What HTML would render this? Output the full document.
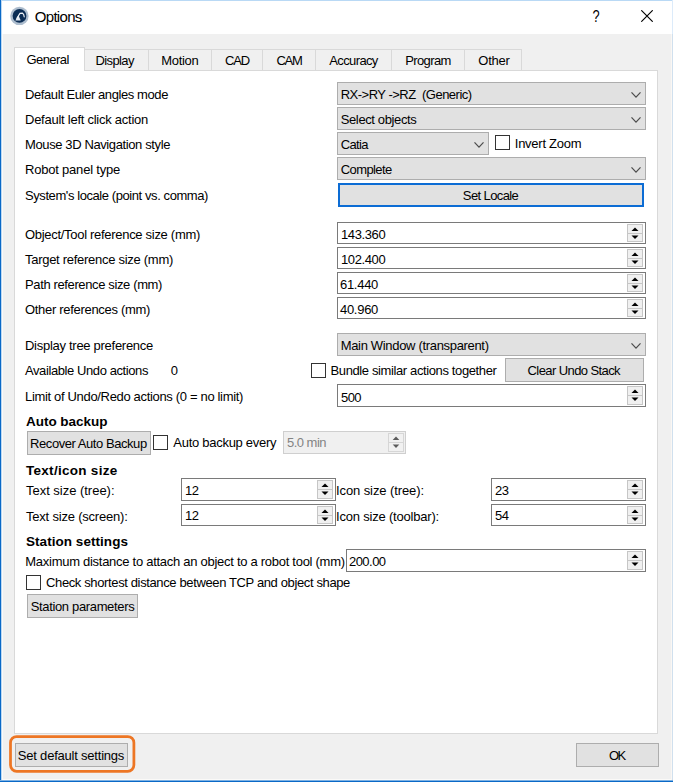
<!DOCTYPE html>
<html><head><meta charset="utf-8"><title>Options</title>
<style>
html,body{margin:0;padding:0}
body{width:673px;height:782px;overflow:hidden;background:#f0f0f0;position:relative;font-family:"Liberation Sans", sans-serif;font-size:13px;color:#000}
#w>div,#w>svg{position:absolute}
.t{white-space:nowrap;line-height:20px;height:20px}
</style></head><body><div id="w">
<div style="left:0px;top:0px;width:673px;height:34px;background:#fff"></div>
<div style="left:0px;top:0px;width:673px;height:1px;background:#b9d9f5"></div>
<div style="left:2px;top:34px;width:1px;height:746px;background:#fbfaf8"></div>
<div style="left:0px;top:779px;width:673px;height:1px;background:#fbfaf8"></div>
<div style="left:0px;top:0px;width:1px;height:782px;background:#0a69c7"></div>
<div style="left:1px;top:0px;width:1px;height:782px;background:#bcd8f2"></div>
<div style="left:671px;top:34px;width:1px;height:746px;background:#faf7f4"></div>
<div style="left:672px;top:0px;width:1px;height:782px;background:#d0e0ee"></div>
<div style="left:672px;top:0px;width:1px;height:34px;background:#dcebfa"></div>
<div style="left:0px;top:780px;width:673px;height:1px;background:#7fb2e3"></div>
<div style="left:0px;top:781px;width:673px;height:1px;background:#0a69c7"></div>
<div style="left:14px;top:70px;width:644px;height:664px;background:#fff;border:1px solid #d9d9d9;box-sizing:border-box"></div>
<div style="left:464px;top:49px;width:58px;height:21px;background:#f0f0f0;border:1px solid #d9d9d9;border-bottom:none;box-sizing:border-box"></div>
<div style="left:391px;top:49px;width:74px;height:21px;background:#f0f0f0;border:1px solid #d9d9d9;border-bottom:none;box-sizing:border-box"></div>
<div style="left:315px;top:49px;width:77px;height:21px;background:#f0f0f0;border:1px solid #d9d9d9;border-bottom:none;box-sizing:border-box"></div>
<div style="left:262px;top:49px;width:54px;height:21px;background:#f0f0f0;border:1px solid #d9d9d9;border-bottom:none;box-sizing:border-box"></div>
<div style="left:211px;top:49px;width:52px;height:21px;background:#f0f0f0;border:1px solid #d9d9d9;border-bottom:none;box-sizing:border-box"></div>
<div style="left:148px;top:49px;width:64px;height:21px;background:#f0f0f0;border:1px solid #d9d9d9;border-bottom:none;box-sizing:border-box"></div>
<div style="left:84px;top:49px;width:65px;height:21px;background:#f0f0f0;border:1px solid #d9d9d9;border-bottom:none;box-sizing:border-box"></div>
<div style="left:14px;top:47px;width:71px;height:24px;background:#fff;border:1px solid #d9d9d9;border-bottom:none;box-sizing:border-box"></div>
<div style="left:337px;top:82px;width:309px;height:23px;background:#e1e1e1;border:1px solid #adadad;box-sizing:border-box"></div>
<svg style="left:629.5px;top:90.6px" width="12" height="8" viewBox="0 0 12 8"><path d="M1.5 1.4 L6 6.2 L10.5 1.4" fill="none" stroke="#4d4d4d" stroke-width="1.25"/></svg>
<div style="left:337px;top:107px;width:309px;height:23px;background:#e1e1e1;border:1px solid #adadad;box-sizing:border-box"></div>
<svg style="left:629.5px;top:115.6px" width="12" height="8" viewBox="0 0 12 8"><path d="M1.5 1.4 L6 6.2 L10.5 1.4" fill="none" stroke="#4d4d4d" stroke-width="1.25"/></svg>
<div style="left:337px;top:132px;width:152px;height:23px;background:#e1e1e1;border:1px solid #adadad;box-sizing:border-box"></div>
<svg style="left:472.5px;top:140.6px" width="12" height="8" viewBox="0 0 12 8"><path d="M1.5 1.4 L6 6.2 L10.5 1.4" fill="none" stroke="#4d4d4d" stroke-width="1.25"/></svg>
<div style="left:495px;top:135px;width:15px;height:15px;background:#fff;border:1px solid #333;box-sizing:border-box"></div>
<div style="left:337px;top:157px;width:309px;height:23px;background:#e1e1e1;border:1px solid #adadad;box-sizing:border-box"></div>
<svg style="left:629.5px;top:165.6px" width="12" height="8" viewBox="0 0 12 8"><path d="M1.5 1.4 L6 6.2 L10.5 1.4" fill="none" stroke="#4d4d4d" stroke-width="1.25"/></svg>
<div style="left:338px;top:183px;width:306px;height:24px;background:#e1e1e1;border:2px solid #0c6cd4;box-sizing:border-box"></div>
<div style="left:337px;top:222px;width:309px;height:22px;background:#fff;border:1px solid #7a7a7a;box-sizing:border-box"></div>
<div style="left:627px;top:224px;width:16px;height:18px;background:#f0f0f0;border:1px solid #c6c6c6;box-sizing:border-box"></div>
<div style="left:627px;top:233px;width:16px;height:1px;background:#c6c6c6"></div>
<svg style="left:631px;top:227px" width="8" height="5" viewBox="0 0 8 5"><path d="M0.5 4.1 L4 0.4 L7.5 4.1 Z" fill="#000"/></svg>
<svg style="left:631px;top:235px" width="8" height="5" viewBox="0 0 8 5"><path d="M0.5 0.4 L4 4.1 L7.5 0.4 Z" fill="#000"/></svg>
<div style="left:337px;top:247px;width:309px;height:22px;background:#fff;border:1px solid #7a7a7a;box-sizing:border-box"></div>
<div style="left:627px;top:249px;width:16px;height:18px;background:#f0f0f0;border:1px solid #c6c6c6;box-sizing:border-box"></div>
<div style="left:627px;top:258px;width:16px;height:1px;background:#c6c6c6"></div>
<svg style="left:631px;top:252px" width="8" height="5" viewBox="0 0 8 5"><path d="M0.5 4.1 L4 0.4 L7.5 4.1 Z" fill="#000"/></svg>
<svg style="left:631px;top:260px" width="8" height="5" viewBox="0 0 8 5"><path d="M0.5 0.4 L4 4.1 L7.5 0.4 Z" fill="#000"/></svg>
<div style="left:337px;top:272px;width:309px;height:22px;background:#fff;border:1px solid #7a7a7a;box-sizing:border-box"></div>
<div style="left:627px;top:274px;width:16px;height:18px;background:#f0f0f0;border:1px solid #c6c6c6;box-sizing:border-box"></div>
<div style="left:627px;top:283px;width:16px;height:1px;background:#c6c6c6"></div>
<svg style="left:631px;top:277px" width="8" height="5" viewBox="0 0 8 5"><path d="M0.5 4.1 L4 0.4 L7.5 4.1 Z" fill="#000"/></svg>
<svg style="left:631px;top:285px" width="8" height="5" viewBox="0 0 8 5"><path d="M0.5 0.4 L4 4.1 L7.5 0.4 Z" fill="#000"/></svg>
<div style="left:337px;top:297px;width:309px;height:22px;background:#fff;border:1px solid #7a7a7a;box-sizing:border-box"></div>
<div style="left:627px;top:299px;width:16px;height:18px;background:#f0f0f0;border:1px solid #c6c6c6;box-sizing:border-box"></div>
<div style="left:627px;top:308px;width:16px;height:1px;background:#c6c6c6"></div>
<svg style="left:631px;top:302px" width="8" height="5" viewBox="0 0 8 5"><path d="M0.5 4.1 L4 0.4 L7.5 4.1 Z" fill="#000"/></svg>
<svg style="left:631px;top:310px" width="8" height="5" viewBox="0 0 8 5"><path d="M0.5 0.4 L4 4.1 L7.5 0.4 Z" fill="#000"/></svg>
<div style="left:337px;top:333px;width:309px;height:23px;background:#e1e1e1;border:1px solid #adadad;box-sizing:border-box"></div>
<svg style="left:629.5px;top:341.6px" width="12" height="8" viewBox="0 0 12 8"><path d="M1.5 1.4 L6 6.2 L10.5 1.4" fill="none" stroke="#4d4d4d" stroke-width="1.25"/></svg>
<div style="left:311px;top:363px;width:15px;height:15px;background:#fff;border:1px solid #333;box-sizing:border-box"></div>
<div style="left:505px;top:358px;width:139px;height:24px;background:#e1e1e1;border:1px solid #adadad;box-sizing:border-box"></div>
<div style="left:337px;top:384px;width:309px;height:23px;background:#fff;border:1px solid #7a7a7a;box-sizing:border-box"></div>
<div style="left:627px;top:386px;width:16px;height:19px;background:#f0f0f0;border:1px solid #c6c6c6;box-sizing:border-box"></div>
<div style="left:627px;top:395px;width:16px;height:1px;background:#c6c6c6"></div>
<svg style="left:631px;top:389px" width="8" height="5" viewBox="0 0 8 5"><path d="M0.5 4.1 L4 0.4 L7.5 4.1 Z" fill="#000"/></svg>
<svg style="left:631px;top:397px" width="8" height="5" viewBox="0 0 8 5"><path d="M0.5 0.4 L4 4.1 L7.5 0.4 Z" fill="#000"/></svg>
<div style="left:27px;top:431px;width:124px;height:24px;background:#e1e1e1;border:1px solid #adadad;box-sizing:border-box"></div>
<div style="left:153px;top:435px;width:15px;height:15px;background:#fff;border:1px solid #333;box-sizing:border-box"></div>
<div style="left:283px;top:431px;width:123px;height:23px;background:#f0f0f0;border:1px solid #cfcfcf;box-sizing:border-box"></div>
<div style="left:388px;top:433px;width:16px;height:19px;background:#f1f1f1;border:1px solid #d6d6d6;box-sizing:border-box"></div>
<div style="left:388px;top:442px;width:16px;height:1px;background:#d6d6d6"></div>
<svg style="left:392px;top:436px" width="8" height="5" viewBox="0 0 8 5"><path d="M0.7000000000000002 4.1 L4 0.4 L7.3 4.1 Z" fill="#5c5c5c"/></svg>
<svg style="left:392px;top:444px" width="8" height="5" viewBox="0 0 8 5"><path d="M0.7000000000000002 0.4 L4 4.1 L7.3 0.4 Z" fill="#5c5c5c"/></svg>
<div style="left:181px;top:478px;width:155px;height:23px;background:#fff;border:1px solid #7a7a7a;box-sizing:border-box"></div>
<div style="left:317px;top:480px;width:16px;height:19px;background:#f0f0f0;border:1px solid #c6c6c6;box-sizing:border-box"></div>
<div style="left:317px;top:489px;width:16px;height:1px;background:#c6c6c6"></div>
<svg style="left:321px;top:483px" width="8" height="5" viewBox="0 0 8 5"><path d="M0.5 4.1 L4 0.4 L7.5 4.1 Z" fill="#000"/></svg>
<svg style="left:321px;top:491px" width="8" height="5" viewBox="0 0 8 5"><path d="M0.5 0.4 L4 4.1 L7.5 0.4 Z" fill="#000"/></svg>
<div style="left:491px;top:478px;width:155px;height:23px;background:#fff;border:1px solid #7a7a7a;box-sizing:border-box"></div>
<div style="left:627px;top:480px;width:16px;height:19px;background:#f0f0f0;border:1px solid #c6c6c6;box-sizing:border-box"></div>
<div style="left:627px;top:489px;width:16px;height:1px;background:#c6c6c6"></div>
<svg style="left:631px;top:483px" width="8" height="5" viewBox="0 0 8 5"><path d="M0.5 4.1 L4 0.4 L7.5 4.1 Z" fill="#000"/></svg>
<svg style="left:631px;top:491px" width="8" height="5" viewBox="0 0 8 5"><path d="M0.5 0.4 L4 4.1 L7.5 0.4 Z" fill="#000"/></svg>
<div style="left:181px;top:504px;width:155px;height:22px;background:#fff;border:1px solid #7a7a7a;box-sizing:border-box"></div>
<div style="left:317px;top:506px;width:16px;height:18px;background:#f0f0f0;border:1px solid #c6c6c6;box-sizing:border-box"></div>
<div style="left:317px;top:515px;width:16px;height:1px;background:#c6c6c6"></div>
<svg style="left:321px;top:509px" width="8" height="5" viewBox="0 0 8 5"><path d="M0.5 4.1 L4 0.4 L7.5 4.1 Z" fill="#000"/></svg>
<svg style="left:321px;top:517px" width="8" height="5" viewBox="0 0 8 5"><path d="M0.5 0.4 L4 4.1 L7.5 0.4 Z" fill="#000"/></svg>
<div style="left:491px;top:504px;width:155px;height:22px;background:#fff;border:1px solid #7a7a7a;box-sizing:border-box"></div>
<div style="left:627px;top:506px;width:16px;height:18px;background:#f0f0f0;border:1px solid #c6c6c6;box-sizing:border-box"></div>
<div style="left:627px;top:515px;width:16px;height:1px;background:#c6c6c6"></div>
<svg style="left:631px;top:509px" width="8" height="5" viewBox="0 0 8 5"><path d="M0.5 4.1 L4 0.4 L7.5 4.1 Z" fill="#000"/></svg>
<svg style="left:631px;top:517px" width="8" height="5" viewBox="0 0 8 5"><path d="M0.5 0.4 L4 4.1 L7.5 0.4 Z" fill="#000"/></svg>
<div style="left:346px;top:549px;width:300px;height:23px;background:#fff;border:1px solid #7a7a7a;box-sizing:border-box"></div>
<div style="left:627px;top:551px;width:16px;height:19px;background:#f0f0f0;border:1px solid #c6c6c6;box-sizing:border-box"></div>
<div style="left:627px;top:560px;width:16px;height:1px;background:#c6c6c6"></div>
<svg style="left:631px;top:554px" width="8" height="5" viewBox="0 0 8 5"><path d="M0.5 4.1 L4 0.4 L7.5 4.1 Z" fill="#000"/></svg>
<svg style="left:631px;top:562px" width="8" height="5" viewBox="0 0 8 5"><path d="M0.5 0.4 L4 4.1 L7.5 0.4 Z" fill="#000"/></svg>
<div style="left:26px;top:575px;width:15px;height:15px;background:#fff;border:1px solid #333;box-sizing:border-box"></div>
<div style="left:27px;top:594px;width:111px;height:24px;background:#e1e1e1;border:1px solid #adadad;box-sizing:border-box"></div>
<div style="left:15px;top:743px;width:113px;height:24px;background:#e1e1e1;border:1px solid #adadad;box-sizing:border-box"></div>
<svg style="left:0;top:730px" width="150" height="50" viewBox="0 730 150 50"><rect x="10.5" y="736.5" width="123.4" height="34.8" rx="6.2" fill="none" stroke="#ed7624" stroke-width="2.75"/></svg>
<div style="left:576px;top:743px;width:83px;height:24px;background:#e1e1e1;border:1px solid #adadad;box-sizing:border-box"></div>
<div class="t" style="font-size:15px;letter-spacing:-0.700px;left:34.8px;top:7px;color:#000">Options</div>
<div class="t" style="font-size:13px;letter-spacing:-0.223px;left:344px;width:300px;text-align:center;top:50.7px;">Other</div>
<div class="t" style="font-size:13px;letter-spacing:-0.594px;left:278px;width:300px;text-align:center;top:50.7px;">Program</div>
<div class="t" style="font-size:13px;letter-spacing:-0.621px;left:203.5px;width:300px;text-align:center;top:50.7px;">Accuracy</div>
<div class="t" style="font-size:13px;letter-spacing:-1.297px;left:139px;width:300px;text-align:center;top:50.7px;">CAM</div>
<div class="t" style="font-size:13px;letter-spacing:-1.218px;left:87px;width:300px;text-align:center;top:50.7px;">CAD</div>
<div class="t" style="font-size:13px;letter-spacing:-0.305px;left:29.80000000000001px;width:300px;text-align:center;top:50.7px;">Motion</div>
<div class="t" style="font-size:13px;letter-spacing:-0.604px;left:-35.3px;width:300px;text-align:center;top:50.7px;">Display</div>
<div class="t" style="font-size:13px;letter-spacing:-0.579px;left:-102.4px;width:300px;text-align:center;top:49.7px;">General</div>
<div class="t" style="font-size:13px;letter-spacing:-0.408px;left:25px;top:85px;">Default Euler angles mode</div>
<div class="t" style="font-size:13px;letter-spacing:-0.493px;left:340.7px;top:85px;">RX-&gt;RY -&gt;RZ &nbsp;(Generic)</div>
<div class="t" style="font-size:13px;letter-spacing:-0.254px;left:25px;top:110px;">Default left click action</div>
<div class="t" style="font-size:13px;letter-spacing:-0.367px;left:340.7px;top:110px;">Select objects</div>
<div class="t" style="font-size:13px;letter-spacing:-0.386px;left:25px;top:134.5px;">Mouse 3D Navigation style</div>
<div class="t" style="font-size:13px;letter-spacing:-0.612px;left:340.7px;top:135px;">Catia</div>
<div class="t" style="font-size:13px;letter-spacing:-0.260px;left:514.8px;top:133.5px;">Invert Zoom</div>
<div class="t" style="font-size:13px;letter-spacing:-0.206px;left:25px;top:159.5px;">Robot panel type</div>
<div class="t" style="font-size:13px;letter-spacing:-0.580px;left:340.7px;top:160px;">Complete</div>
<div class="t" style="font-size:13px;letter-spacing:-0.419px;left:25px;top:185.5px;">System&#x27;s locale (point vs. comma)</div>
<div class="t" style="font-size:13px;letter-spacing:-0.614px;left:340.5px;width:300px;text-align:center;top:185.6px;">Set Locale</div>
<div class="t" style="font-size:13px;letter-spacing:-0.298px;left:25px;top:224.5px;">Object/Tool reference size (mm)</div>
<div class="t" style="font-size:13px;letter-spacing:-0.386px;left:341px;top:225px;">143.360</div>
<div class="t" style="font-size:13px;letter-spacing:-0.282px;left:25px;top:249.5px;">Target reference size (mm)</div>
<div class="t" style="font-size:13px;letter-spacing:-0.386px;left:341px;top:250px;">102.400</div>
<div class="t" style="font-size:13px;letter-spacing:-0.372px;left:25px;top:274.5px;">Path reference size (mm)</div>
<div class="t" style="font-size:13px;letter-spacing:-0.294px;left:340px;top:275px;">61.440</div>
<div class="t" style="font-size:13px;letter-spacing:-0.309px;left:25px;top:299.5px;">Other references (mm)</div>
<div class="t" style="font-size:13px;letter-spacing:-0.294px;left:340px;top:300px;">40.960</div>
<div class="t" style="font-size:13px;letter-spacing:-0.279px;left:25px;top:336px;">Display tree preference</div>
<div class="t" style="font-size:13px;letter-spacing:-0.323px;left:340.7px;top:336px;">Main Window (transparent)</div>
<div class="t" style="font-size:13px;letter-spacing:-0.410px;left:25px;top:361px;">Available Undo actions</div>
<div class="t" style="font-size:13px;letter-spacing:0.000px;left:170.7px;top:361px;">0</div>
<div class="t" style="font-size:13px;letter-spacing:-0.380px;left:330.5px;top:361px;">Bundle similar actions together</div>
<div class="t" style="font-size:13px;letter-spacing:-0.587px;left:423.79999999999995px;width:300px;text-align:center;top:360.6px;">Clear Undo Stack</div>
<div class="t" style="font-size:13px;letter-spacing:-0.331px;left:25px;top:387px;">Limit of Undo/Redo actions (0 = no limit)</div>
<div class="t" style="font-size:13px;letter-spacing:-0.568px;left:341px;top:388px;">500</div>
<div class="t" style="font-size:13.5px;letter-spacing:-0.024px;left:26px;top:411.5px;font-weight:bold">Auto backup</div>
<div class="t" style="font-size:13px;letter-spacing:-0.444px;left:-61.599999999999994px;width:300px;text-align:center;top:433.6px;">Recover Auto Backup</div>
<div class="t" style="font-size:13px;letter-spacing:-0.276px;left:173.3px;top:433px;">Auto backup every</div>
<div class="t" style="font-size:13px;letter-spacing:-0.520px;left:287px;top:433px;color:#838383">5.0 min</div>
<div class="t" style="font-size:13.5px;letter-spacing:0.283px;left:26px;top:460.5px;font-weight:bold">Text/icon size</div>
<div class="t" style="font-size:13px;letter-spacing:-0.021px;left:26px;top:481px;">Text size (tree):</div>
<div class="t" style="font-size:13px;letter-spacing:-0.398px;left:185px;top:480.8px;">12</div>
<div class="t" style="font-size:13px;letter-spacing:-0.094px;left:336px;top:481px;">Icon size (tree):</div>
<div class="t" style="font-size:13px;letter-spacing:-0.398px;left:495px;top:480.8px;">23</div>
<div class="t" style="font-size:13px;letter-spacing:-0.204px;left:26px;top:506.5px;">Text size (screen):</div>
<div class="t" style="font-size:13px;letter-spacing:-0.398px;left:185px;top:506.29999999999995px;">12</div>
<div class="t" style="font-size:13px;letter-spacing:-0.197px;left:336px;top:506.5px;">Icon size (toolbar):</div>
<div class="t" style="font-size:13px;letter-spacing:-0.398px;left:495px;top:506.29999999999995px;">54</div>
<div class="t" style="font-size:13.5px;letter-spacing:0.046px;left:26px;top:531.5px;font-weight:bold">Station settings</div>
<div class="t" style="font-size:13px;letter-spacing:-0.277px;left:25.3px;top:552px;">Maximum distance to attach an object to a robot tool (mm)</div>
<div class="t" style="font-size:13px;letter-spacing:-0.544px;left:349px;top:551.8px;">200.00</div>
<div class="t" style="font-size:13px;letter-spacing:-0.371px;left:46px;top:572.5px;">Check shortest distance between TCP and object shape</div>
<div class="t" style="font-size:13px;letter-spacing:-0.347px;left:-67.5px;width:300px;text-align:center;top:596.6px;">Station parameters</div>
<div class="t" style="font-size:13px;letter-spacing:-0.214px;left:-79px;width:300px;text-align:center;top:746px;">Set default settings</div>
<div class="t" style="font-size:13px;letter-spacing:-1.398px;left:466.9px;width:300px;text-align:center;top:746px;">OK</div>
<svg style="left:8px;top:5px" width="23" height="22" viewBox="8 5 23 22"><circle cx="19.45" cy="15.9" r="9.2" fill="#98acc2" opacity=".8"/><circle cx="19.5" cy="15.9" r="6.9" fill="#0b2d55"/><path d="M15.3 20.4 L18.5 15.2 L20.7 20.4 Z" fill="#e3eaf2"/><path d="M16.9 18.3 L20 13.4 L22.3 13.1 Q24.1 14.4 24.2 16.8" fill="none" stroke="#f2f5f9" stroke-width="1.2" stroke-linecap="round"/></svg>
<div style="left:586px;top:7px;width:20px;text-align:center;font-size:16px;line-height:20px;color:#000;transform:scaleX(0.8)" class="t">?</div>
<svg style="left:641px;top:10px" width="12" height="12" viewBox="0 0 12 12"><path d="M0.3 0.3 L11.7 11.7 M11.7 0.3 L0.3 11.7" stroke="#000" stroke-width="1.15" fill="none"/></svg>
</div></body></html>
